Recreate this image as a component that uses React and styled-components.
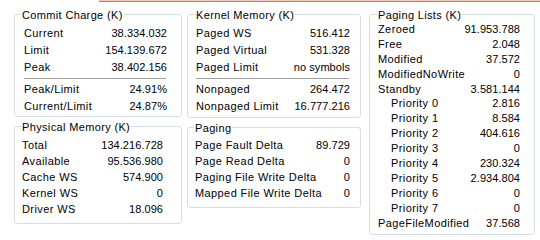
import React from 'react';
import styled, { createGlobalStyle } from 'styled-components';

const GlobalStyle = createGlobalStyle`
  body {
    margin: 0;
    background: #ffffff;
    font-family: "Liberation Sans", Arial, sans-serif;
    font-size: 11px;
    color: #000000;
  }
`;

const Screen = styled.div`
  width: 540px;
  height: 240px;
  overflow: hidden;
  background: #ffffff;
`;

// edge of a popup that hangs over the panel from above
const TopStrip = styled.div`
  margin-left: 99px;
  height: 1px;
  background: #f3c9b9;
  border-bottom: 1px solid #b58474;
`;

const Columns = styled.div`
  display: flex;
  align-items: flex-start;
  padding: 4px 0 0 14px;
`;

const Column = styled.div`
  display: flex;
  flex-direction: column;
  width: ${p => p.$w}px;
  margin-right: ${p => p.$gap || 0}px;
`;

const Group = styled.fieldset`
  margin: ${p => p.$mt || 0}px 0 0;
  padding: 0;
  min-inline-size: 0;
  border: 1px solid #d5dfe5;
  border-radius: 3px;
  box-sizing: border-box;
  width: 100%;
`;

const Legend = styled.legend`
  margin-left: ${p => p.$ml}px;
  padding: 3px 1px 0;
  line-height: 13px;
  font-size: 11px;
  letter-spacing: 0.35px;
  color: #000000;
`;

const Body = styled.div`
  display: flex;
  flex-direction: column;
  padding: ${p => p.$pt}px ${p => p.$pr}px ${p => p.$pb}px ${p => p.$pl}px;
`;

const Row = styled.div`
  display: flex;
  justify-content: space-between;
  align-items: center;
  height: ${p => p.$h}px;
  line-height: ${p => p.$h}px;
  white-space: nowrap;
`;

const Label = styled.span`
  padding-left: ${p => p.$indent || 0}px;
  letter-spacing: 0.4px;
`;

const Value = styled.span`
  text-align: right;
  letter-spacing: 0.05px;
`;

const Separator = styled.div`
  height: 1px;
  margin: 2px 1px 2px 0;
  background: #a0a0a0;
  box-shadow: 0 1px 0 #ffffff;
`;

function Panel({ title, titleAt, mt, pad, rowHeight, rows }) {
  return (
    <Group $mt={mt}>
      <Legend $ml={titleAt}>{title}</Legend>
      <Body $pt={pad[0]} $pr={pad[1]} $pb={pad[2]} $pl={pad[3]}>
        {rows.map((r, i) =>
          r === '-' ? (
            <Separator key={i} />
          ) : (
            <Row key={i} $h={rowHeight}>
              <Label $indent={r[2]}>{r[0]}</Label>
              <Value>{r[1]}</Value>
            </Row>
          )
        )}
      </Body>
    </Group>
  );
}

const commit = [
  ['Current', '38.334.032'],
  ['Limit', '154.139.672'],
  ['Peak', '38.402.156'],
  '-',
  ['Peak/Limit', '24.91%'],
  ['Current/Limit', '24.87%'],
];

const physical = [
  ['Total', '134.216.728'],
  ['Available', '95.536.980'],
  ['Cache WS', '574.900'],
  ['Kernel WS', '0'],
  ['Driver WS', '18.096'],
];

const kernel = [
  ['Paged WS', '516.412'],
  ['Paged Virtual', '531.328'],
  ['Paged Limit', 'no symbols'],
  '-',
  ['Nonpaged', '264.472'],
  ['Nonpaged Limit', '16.777.216'],
];

const paging = [
  ['Page Fault Delta', '89.729'],
  ['Page Read Delta', '0'],
  ['Paging File Write Delta', '0'],
  ['Mapped File Write Delta', '0'],
];

const pagingLists = [
  ['Zeroed', '91.953.788'],
  ['Free', '2.048'],
  ['Modified', '37.572'],
  ['ModifiedNoWrite', '0'],
  ['Standby', '3.581.144'],
  ['Priority 0', '2.816', 13],
  ['Priority 1', '8.584', 13],
  ['Priority 2', '404.616', 13],
  ['Priority 3', '0', 13],
  ['Priority 4', '230.324', 13],
  ['Priority 5', '2.934.804', 13],
  ['Priority 6', '0', 13],
  ['Priority 7', '0', 13],
  ['PageFileModified', '37.568'],
];

export default function App() {
  return (
    <Screen>
      <GlobalStyle />
      <TopStrip />
      <Columns>
        <Column $w={168} $gap={5}>
          <Panel title="Commit Charge (K)" titleAt={6} pad={[3, 14, 1, 9]} rowHeight={17} rows={commit} />
          <Panel title="Physical Memory (K)" titleAt={6} mt={1} pad={[3, 18, 6, 7]} rowHeight={16} rows={physical} />
        </Column>
        <Column $w={174} $gap={8}>
          <Panel title="Kernel Memory (K)" titleAt={7} pad={[3, 10, 2, 8]} rowHeight={17} rows={kernel} />
          <Panel title="Paging" titleAt={6} mt={1} pad={[2, 10, 6, 7]} rowHeight={16} rows={paging} />
        </Column>
        <Column $w={166}>
          <Panel title="Paging Lists (K)" titleAt={7} pad={[0, 14, 4, 8]} rowHeight={14.9} rows={pagingLists} />
        </Column>
      </Columns>
    </Screen>
  );
}
